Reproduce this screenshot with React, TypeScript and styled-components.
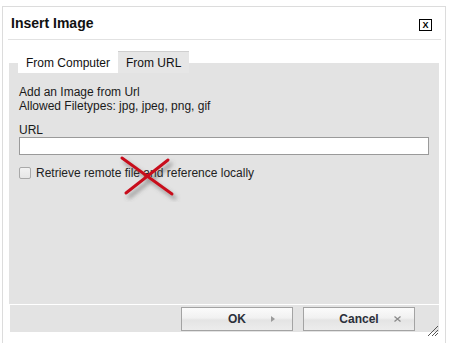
import styled, { createGlobalStyle } from "styled-components";

const GlobalStyle = createGlobalStyle`
  body {
    margin: 0;
    background: #fff;
    font-family: "Liberation Sans", Arial, sans-serif;
    font-size: 12px;
    color: #1a1a1a;
  }
`;

const Dialog = styled.div`
  position: relative;
  box-sizing: border-box;
  width: 444px;
  height: 345px;
  margin: 6px 0 0 2px;
  border: 1px solid #dcdcdc;
  background: #fff;
`;

const Header = styled.div`
  display: flex;
  align-items: center;
  justify-content: space-between;
  margin: 0 4px 0 5px;
  padding: 8px 9px 7px 3px;
  border-bottom: 1px solid #e2e2e2;
`;

const Title = styled.div`
  font-size: 14px;
  font-weight: bold;
  line-height: 17px;
  color: #111;
`;

const CloseBox = styled.div`
  box-sizing: border-box;
  width: 13px;
  height: 12px;
  margin-top: 2px;
  border: 1px solid #000;
  font-size: 9px;
  font-weight: bold;
  line-height: 10px;
  text-align: center;
  color: #000;
`;

const Panel = styled.div`
  margin: 11px 6px 0 6px;
  background: #e3e3e3;
`;

const TabBar = styled.div`
  display: flex;
  padding-left: 9px;
  background: linear-gradient(to bottom, #fff 0 12px, #e3e3e3 12px);
`;

const Tab = styled.div<{ $active?: boolean }>`
  box-sizing: border-box;
  height: 22px;
  padding: 4px 8px 0 8px;
  line-height: 14px;
  background: ${(p) => (p.$active ? "#e6e6e6" : "#fff")};
  border-top: 1px solid ${(p) => (p.$active ? "#cfcfcf" : "#fff")};
  color: #111;
`;

const Content = styled.div`
  position: relative;
  box-sizing: border-box;
  height: 231px;
  padding: 12px 10px 0 10px;
`;

const Line = styled.div`
  line-height: 14px;
`;

const FieldLabel = styled.div`
  margin-top: 10px;
  line-height: 14px;
`;

const UrlInput = styled.input`
  display: block;
  box-sizing: border-box;
  width: 410px;
  height: 18px;
  margin: 0;
  border: 1px solid #9a9a9a;
  background: #fff;
  outline: none;
`;

const CheckRow = styled.label`
  display: flex;
  align-items: center;
  gap: 5px;
  margin-top: 11px;
  line-height: 14px;
  color: #222;
`;

const Check = styled.input`
  appearance: none;
  box-sizing: border-box;
  width: 12px;
  height: 12px;
  margin: 0;
  border: 1px solid #a9a9a9;
  border-radius: 2px;
  background: linear-gradient(#f2f2f2, #e6e6e6);
`;

const Cross = styled.svg`
  position: absolute;
  left: 110px;
  top: 79px;
`;

const Footer = styled.div`
  display: flex;
  justify-content: flex-end;
  gap: 10px;
  margin: 1px 6px 0 7px;
  padding: 2px 24px 1px 0;
  background: #e3e3e3;
`;

const Button = styled.div<{ $iconGap: number }>`
  box-sizing: border-box;
  display: grid;
  grid-template-columns: 1fr auto 1fr;
  align-items: center;
  width: 112px;
  height: 24px;
  border: 1px solid #a3a3a3;
  background: linear-gradient(to bottom, #fbfbfb 0%, #f1f1f1 45%, #e4e4e4 55%, #ececec 100%);
  font-size: 12px;
  font-weight: bold;
  color: #2b2f3a;

  span:first-child {
    grid-column: 2;
  }

  svg {
    justify-self: end;
    margin-right: ${(p) => p.$iconGap}px;
  }
`;

const Grip = styled.svg`
  position: absolute;
  right: 6px;
  top: 318px;
`;

export default function App() {
  return (
    <>
      <GlobalStyle />
      <Dialog>
        <Header>
          <Title>Insert Image</Title>
          <CloseBox>X</CloseBox>
        </Header>
        <Panel>
          <TabBar>
            <Tab>From Computer</Tab>
            <Tab $active>From URL</Tab>
          </TabBar>
          <Content>
            <Line>Add an Image from Url</Line>
            <Line>Allowed Filetypes: jpg, jpeg, png, gif</Line>
            <FieldLabel>URL</FieldLabel>
            <UrlInput type="text" />
            <CheckRow>
              <Check type="checkbox" />
              <span>Retrieve remote file and reference locally</span>
            </CheckRow>
            <Cross width="70" height="50" viewBox="0 0 70 50">
              <defs>
                <filter id="sh" x="-20%" y="-20%" width="150%" height="150%">
                  <feDropShadow dx="3" dy="4" stdDeviation="2" floodColor="#555" floodOpacity="0.6" />
                </filter>
              </defs>
              <g filter="url(#sh)" stroke="#c8101e" strokeWidth="3" strokeLinecap="round">
                <line x1="3" y1="6" x2="53" y2="42" />
                <line x1="49" y1="8" x2="7" y2="41" />
              </g>
            </Cross>
          </Content>
        </Panel>
        <Footer>
          <Button $iconGap={17}>
            <span>OK</span>
            <svg width="4" height="6" viewBox="0 0 4 6">
              <path d="M0 0 L4 3 L0 6 Z" fill="#9a9a9a" />
            </svg>
          </Button>
          <Button $iconGap={13}>
            <span>Cancel</span>
            <svg width="7" height="6" viewBox="0 0 7 6">
              <path d="M0.5 0.5 L6.5 5.5 M6.5 0.5 L0.5 5.5" stroke="#8a8a8a" strokeWidth="1.3" />
            </svg>
          </Button>
        </Footer>
        <Grip width="12" height="11" viewBox="0 0 12 11">
          <path d="M11 1 L1 11 M11 5 L5 11 M11 8 L8 11" stroke="#555" strokeWidth="1" />
        </Grip>
      </Dialog>
    </>
  );
}
